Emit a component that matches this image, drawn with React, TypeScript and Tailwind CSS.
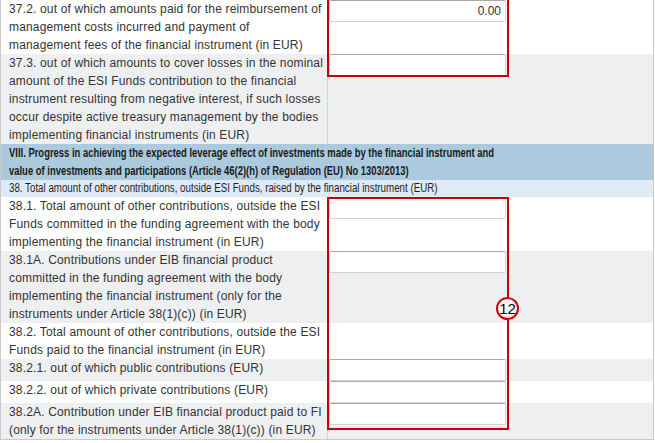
type Row = {
  id: string;
  lines: string[];
  shade: "white" | "gray";
  input?: boolean;
  value?: string;
};

const topRows: Row[] = [
  {
    id: "37.2",
    lines: [
      "37.2. out of which amounts paid for the reimbursement of",
      "management costs incurred and payment of",
      "management fees of the financial instrument (in EUR)",
    ],
    shade: "white",
    input: true,
    value: "0.00",
  },
  {
    id: "37.3",
    lines: [
      "37.3. out of which amounts to cover losses in the nominal",
      "amount of the ESI Funds contribution to the financial",
      "instrument resulting from negative interest, if such losses",
      "occur despite active treasury management by the bodies",
      "implementing financial instruments (in EUR)",
    ],
    shade: "gray",
    input: true,
  },
];

const bottomRows: Row[] = [
  {
    id: "38.1",
    lines: [
      "38.1. Total amount of other contributions, outside the ESI",
      "Funds committed in the funding agreement with the body",
      "implementing the financial instrument (in EUR)",
    ],
    shade: "white",
    input: true,
  },
  {
    id: "38.1A",
    lines: [
      "38.1A. Contributions under EIB financial product",
      "committed in the funding agreement with the body",
      "implementing the financial instrument (only for the",
      "instruments under Article 38(1)(c)) (in EUR)",
    ],
    shade: "gray",
    input: true,
  },
  {
    id: "38.2",
    lines: [
      "38.2. Total amount of other contributions, outside the ESI",
      "Funds paid to the financial instrument (in EUR)",
    ],
    shade: "white",
  },
  {
    id: "38.2.1",
    lines: ["38.2.1. out of which public contributions (EUR)"],
    shade: "gray",
    input: true,
  },
  {
    id: "38.2.2",
    lines: ["38.2.2. out of which private contributions (EUR)"],
    shade: "white",
    input: true,
  },
  {
    id: "38.2A",
    lines: [
      "38.2A. Contribution under EIB financial product paid to FI",
      "(only for the instruments under Article 38(1)(c)) (in EUR)",
    ],
    shade: "gray",
    input: true,
  },
];

const FieldRow = ({ row }: { row: Row }) => {
  return (
    <div
      className={`flex ${row.shade === "gray" ? "bg-[#eeeff1]" : "bg-white"}`}
    >
      <div className="w-[326px] shrink-0 overflow-hidden pl-[8px] text-[12px] leading-[18px] tracking-[0.16px] text-[#333]">
        {row.lines.map((line) => (
          <div key={line} className="whitespace-nowrap">
            {line}
          </div>
        ))}
      </div>
      <div className="flex-1 border-l border-[#d2d2d2] pl-[1px]">
        {row.input && (
          <div className="flex h-[22px] w-[177px] items-center justify-end rounded-[2px] border border-[#d4d4d4] border-t-[#a8a8a8] bg-white pr-[4px] text-[12px] text-[#333]">
            {row.value}
          </div>
        )}
      </div>
    </div>
  );
};

export default function App() {
  return (
    <div className="min-h-[443px] w-[655px] bg-white font-['Liberation_Sans',Arial,sans-serif]">
      <div className="relative w-[654px] border-x border-b border-[#c9c9c9]">
        {topRows.map((row) => (
          <FieldRow key={row.id} row={row} />
        ))}

        <div className="overflow-hidden bg-[#abcadd] pl-[8px] text-[12.5px] font-bold leading-[18px] text-[#1a1a1a]">
          <div className="w-[800px] origin-left scale-x-[0.755] whitespace-nowrap">
            VIII. Progress in achieving the expected leverage effect of
            investments made by the financial instrument and
            <br />
            value of investments and participations (Article 46(2)(h) of
            Regulation (EU) No 1303/2013)
          </div>
        </div>

        <div className="h-[17px] overflow-hidden bg-[#deeaf5] pl-[8px] text-[12.5px] leading-[17px] text-[#1f1f1f]">
          <div className="w-[800px] origin-left scale-x-[0.78] whitespace-nowrap">
            38. Total amount of other contributions, outside ESI Funds, raised
            by the financial instrument (EUR)
          </div>
        </div>

        {bottomRows.map((row) => (
          <FieldRow key={row.id} row={row} />
        ))}

        {/* annotation boxes */}
        <div className="pointer-events-none absolute left-[326px] top-[-2px] h-[79px] w-[182px] border-2 border-[#c8000a]" />
        <div className="pointer-events-none absolute left-[326px] top-[197px] h-[233px] w-[182px] border-2 border-[#c8000a]" />
        <div className="absolute left-[495px] top-[297px] flex h-[23px] w-[23px] items-center justify-center rounded-full border-2 border-[#d0000c] bg-[radial-gradient(circle_at_45%_35%,#ffffff_45%,#f3c2c2)] text-[15px] leading-none text-black">
          12
        </div>
      </div>
    </div>
  );
}
